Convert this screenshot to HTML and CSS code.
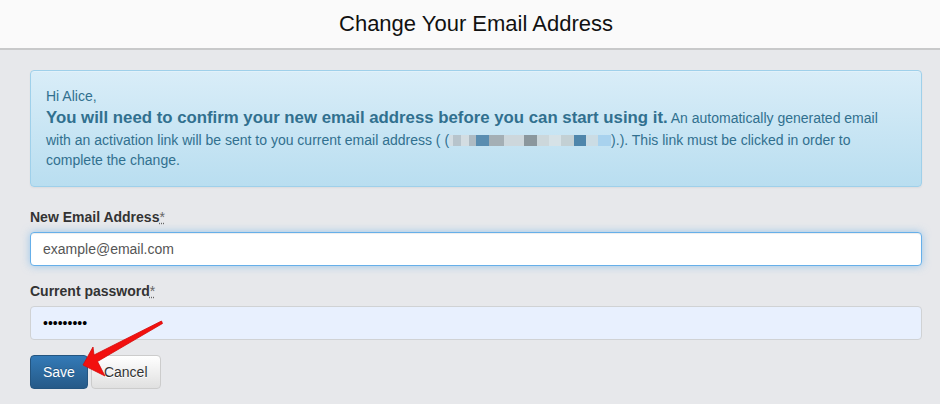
FILE: index.html
```html
<!DOCTYPE html>
<html lang="en">
<head>
    <meta charset="UTF-8">
    <title>Change Your Email Address</title>
    <link rel="stylesheet" href="styles.css">
</head>
<body>
    <div class="topbar">
        <h1>Change Your Email Address</h1>
    </div>

    <div class="page">
        <div class="alert">
            Hi Alice,<br>
            <strong class="lead">You will need to confirm your new email address before you can start using it.</strong>
            An automatically generated email with an activation link will be sent to you current email address ( (<span class="blur"><i style="width:4px;background:#d2dde3"></i><i style="width:8px;background:#b7c4cc"></i><i style="width:8px;background:#d3dde2"></i><i style="width:7px;background:#aebbc3"></i><i style="width:13px;background:#5a8db0"></i><i style="width:15px;background:#a4afb5"></i><i style="width:20px;background:#cdd7dc"></i><i style="width:13px;background:#8b979d"></i><i style="width:12px;background:#ccd7db"></i><i style="width:12px;background:#d6e2e7"></i><i style="width:13px;background:#c3d0d4"></i><i style="width:12px;background:#4f86ab"></i><i style="width:12px;background:#cbdce4"></i><i style="width:13px;background:#a8d2ee"></i></span>).). This link must be clicked in order to complete the change.
        </div>

        <form class="form">
            <div class="group">
                <label>New Email Address<abbr title="required">*</abbr></label>
                <input class="field focus" type="email" value="example@email.com">
            </div>
            <div class="group">
                <label>Current password<abbr title="required">*</abbr></label>
                <input class="field filled" type="password" value="secretpwd">
            </div>
            <div class="actions">
                <button type="button" class="btn btn-primary">Save</button>
                <button type="button" class="btn btn-default">Cancel</button>
            </div>
        </form>
    </div>

    <!-- annotation arrow -->
    <svg class="arrow" width="940" height="404" viewBox="0 0 940 404">
        <polygon points="83,365 93,347 94,355 161.5,321 162.5,323.5 97.5,361.5 105,376" fill="#f2100f" stroke="#d40a0a" stroke-width="0.8" stroke-linejoin="round"/>
    </svg>
</body>
</html>
```

FILE: styles.css
```css
*{
    margin: 0;
    padding: 0;
    box-sizing: border-box;
}

body{
    position: relative;
    width: 940px;
    height: 404px;
    overflow: hidden;
    background: #e7e8eb;
    font-family: "Liberation Sans", Arial, sans-serif;
    font-size: 14px;
    line-height: 20px;
    color: #333;
}

.topbar{
    height: 50px;
    padding-left: 12px;
    background: #fafafa;
    border-bottom: 2px solid #c8c9ca;
    text-align: center;
}
.topbar h1{
    font-weight: normal;
    font-size: 22px;
    line-height: 47px;
    color: #111;
}

.page{
    padding: 20px 18px 0 30px;
}

/* bootstrap-theme style info box */
.alert{
    padding: 15px 15px 16px;
    border: 1px solid #9fd0ea;
    border-radius: 4px;
    background: linear-gradient(to bottom, #d9edf8 0, #b9def0 100%);
    box-shadow: inset 0 1px 0 rgba(255,255,255,.25), 0 1px 2px rgba(0,0,0,.05);
    color: #31708f;
    margin-bottom: 20px;
}
.alert .lead{
    font-size: 16.8px;
    line-height: 24px;
}
.blur{
    display: inline-flex;
    height: 11px;
    vertical-align: -1px;
}
.blur i{
    display: block;
    height: 100%;
}

.group{
    margin-bottom: 15px;
}
.group label{
    display: block;
    font-weight: bold;
    margin-bottom: 5px;
}
.group abbr{
    font-weight: normal;
    color: #666;
    text-decoration: underline dotted;
}

.field{
    display: block;
    width: 100%;
    height: 34px;
    padding: 6px 12px;
    font-family: inherit;
    font-size: 14px;
    color: #555;
    background: #fff;
    border: 1px solid #ccc;
    border-radius: 4px;
    outline: none;
}
.field.focus{
    border-color: #66afe9;
    box-shadow: inset 0 1px 1px rgba(0,0,0,.075), 0 0 8px rgba(102,175,233,.6);
}
.field.filled{
    background: #e8f0fe;
    border-color: #d0d2d4;
    color: #000;
}

.actions{
    display: flex;
    gap: 3px;
}
.btn{
    height: 34px;
    padding: 6px 12px;
    font-family: inherit;
    font-size: 14px;
    line-height: 20px;
    border-radius: 4px;
    border: 1px solid;
}
.btn-primary{
    color: #fff;
    background: linear-gradient(to bottom, #337ab7 0, #265a88 100%);
    border-color: #245580;
    text-shadow: 0 -1px 0 rgba(0,0,0,.2);
}
.btn-default{
    color: #333;
    background: linear-gradient(to bottom, #fff 0, #e0e0e0 100%);
    border-color: #ccc;
    text-shadow: 0 1px 0 #fff;
}

.arrow{
    position: absolute;
    left: 0;
    top: 0;
    pointer-events: none;
}
```
